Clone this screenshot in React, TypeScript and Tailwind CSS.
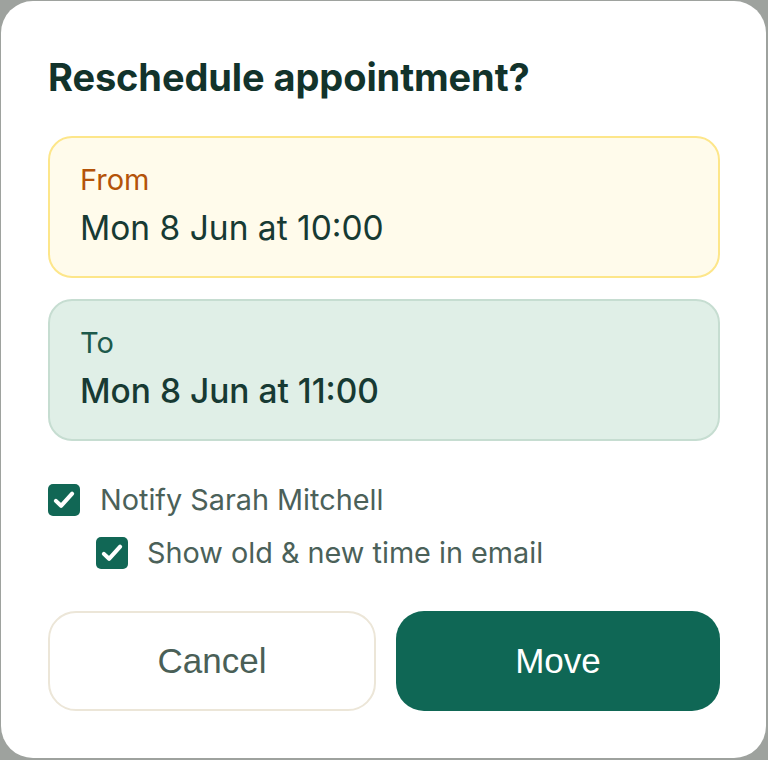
import React from 'react'

function Check() {
  return (
    <span className="w-[32px] h-[32px] rounded-[5px] bg-[#116755] flex items-center justify-center shrink-0">
      <svg viewBox="0 0 24 24" className="w-[26px] h-[26px]" fill="none" stroke="white" strokeWidth="3.8" strokeLinecap="round" strokeLinejoin="round">
        <polyline points="4.5,12.8 9.3,17.4 19.5,6.2" />
      </svg>
    </span>
  )
}

export default function App() {
  return (
    <div className="w-[768px] h-[760px] bg-[#9ea29e] pt-px pl-px overflow-hidden" style={{ fontFamily: 'Inter, "Noto Sans", sans-serif' }}>
      <div className="w-[765px] h-[757px] bg-white rounded-[32px] px-[47px] pt-[57px]">
        <h1 className="text-[38px] leading-none font-bold text-[#12332b] tracking-[-0.1px]">
          Reschedule appointment?
        </h1>

        {/* From */}
        <div className="mt-[40px] w-[672px] h-[142px] rounded-[24px] border-2 border-[#fde68a] bg-[#fffbeb] px-[30px] pt-[27px] flex flex-col">
          <span className="text-[29px] leading-none text-[#b45309]">From</span>
          <span className="mt-[18px] text-[33.5px] leading-none text-[#173a33]">Mon 8 Jun at 10:00</span>
        </div>

        {/* To */}
        <div className="mt-[21px] w-[672px] h-[142px] rounded-[24px] border-2 border-[#c6ddd1] bg-[#e0efe7] px-[30px] pt-[27px] flex flex-col">
          <span className="text-[29px] leading-none text-[#1d5a4b]">To</span>
          <span className="mt-[18px] text-[33.5px] leading-none font-medium text-[#173a33]">Mon 8 Jun at 11:00</span>
        </div>

        <div className="mt-[43px] flex flex-col gap-[21px]">
          <label className="flex items-center gap-[20px]">
            <Check />
            <span className="text-[28.8px] leading-none text-[#4b6159]">Notify Sarah Mitchell</span>
          </label>
          <label className="flex items-center gap-[19px] pl-[48px]">
            <Check />
            <span className="text-[28.8px] leading-none text-[#4b6159]">Show old &amp; new time in email</span>
          </label>
        </div>

        <div className="mt-[42px] flex gap-[20px]">
          <button
            className="w-[328px] shrink-0 h-[100px] rounded-[28px] border-2 border-[#ece6d8] bg-white text-[35px] text-[#4a5f57]"
            style={{ fontFamily: '"Liberation Sans", Arial, sans-serif' }}
          >
            Cancel
          </button>
          <button
            className="w-[324px] shrink-0 h-[100px] rounded-[28px] bg-[#0f6755] text-[35px] text-white"
            style={{ fontFamily: '"Liberation Sans", Arial, sans-serif' }}
          >
            Move
          </button>
        </div>
      </div>
    </div>
  )
}
